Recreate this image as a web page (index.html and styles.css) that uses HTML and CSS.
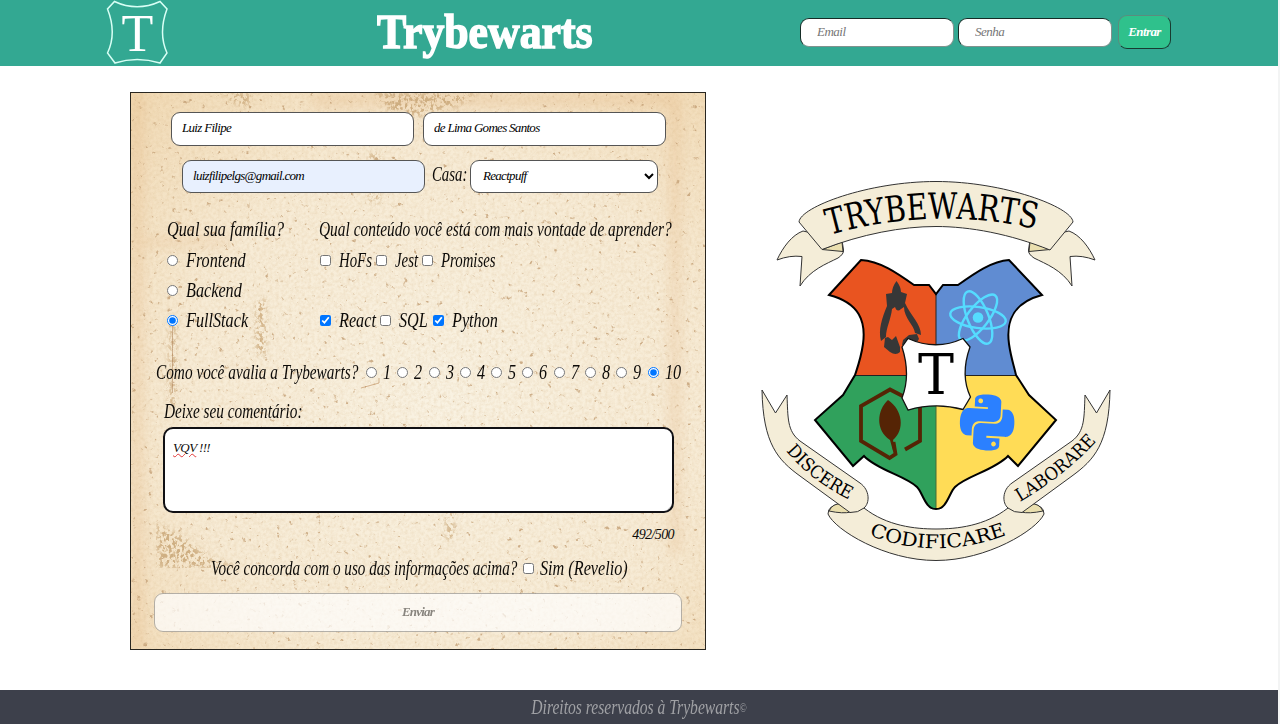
FILE: index.html
```html
<!DOCTYPE html>
<html lang="pt-BR">
<head>
<meta charset="UTF-8">
<title>Trybewarts</title>
<link rel="stylesheet" href="styles.css">
</head>
<body>
<header class="header">
  <svg class="header-logo" viewBox="106 0 62 66">
    <path d="M114.500 1.500Q137 12 160 1.500L167 9Q158 33 167 53L160 63Q137 56 115 63L107.500 53Q117 33 107.500 9Z" fill="none" stroke="#d8fff5" stroke-width="1.500"/>
    <text x="137.500" y="51" text-anchor="middle" font-family="Liberation Serif, serif" font-size="52" fill="#fff">T</text>
  </svg>
  <h1 class="title"><span>Trybewarts</span></h1>
  <form class="login">
    <input type="text" placeholder="Email">
    <input type="password" placeholder="Senha">
    <button type="button">Entrar</button>
  </form>
</header>
<main class="main">
  <form class="form">
    <svg class="paper" width="574" height="557" preserveAspectRatio="none">
      <defs>
        <radialGradient id="tone" cx=".54" cy=".56" r=".76">
          <stop offset="0" stop-color="#f9f2e2"/><stop offset=".6" stop-color="#f7ebd5"/><stop offset="1" stop-color="#f1dab5"/>
        </radialGradient>
        <filter id="grain" x="0" y="0" width="1" height="1">
          <feTurbulence type="fractalNoise" baseFrequency=".31" numOctaves="3" seed="4"/>
          <feColorMatrix values="0 0 0 0 .65  0 0 0 0 .44  0 0 0 0 .22  .9 0 0 0 -.32"/>
        </filter>
        <filter id="specks" x="0" y="0" width="1" height="1">
          <feTurbulence type="fractalNoise" baseFrequency=".173" numOctaves="4" seed="31"/>
          <feColorMatrix values="0 0 0 0 .55  0 0 0 0 .35  0 0 0 0 .18  0 7 0 0 -4.900"/>
        </filter>
        <filter id="stains" x="0" y="0" width="1" height="1">
          <feGaussianBlur in="SourceAlpha" stdDeviation="3" result="area"/>
          <feTurbulence type="fractalNoise" baseFrequency=".31 .23" numOctaves="3" seed="9"/>
          <feColorMatrix values="0 0 0 0 .6  0 0 0 0 .4  0 0 0 0 .2  0 7 0 0 -3.300"/>
          <feComposite in2="area" operator="in"/>
        </filter>
        <filter id="soft"><feGaussianBlur stdDeviation="6"/></filter>
      </defs>
      <rect width="574" height="557" fill="url(#tone)"/>
      <g fill="#dfa66b" opacity=".22" filter="url(#soft)">
        <rect x="0" y="0" width="12" height="557"/><rect x="538" y="0" width="12" height="460"/>
        <rect x="180" y="0" width="360" height="14"/><rect x="0" y="145" width="100" height="8"/>
      </g>
      <rect width="574" height="557" filter="url(#grain)" opacity=".5"/>
      <rect width="574" height="557" filter="url(#specks)" opacity=".8"/>
      <g filter="url(#stains)" opacity=".9">
        <path d="M90 0H122L116 14L102 10ZM242 0H350L325 13L285 24L258 18Z"/>
        <path d="M125 206H135V262H125ZM38 225H45V315H38ZM315 418H323V447H315ZM25 430L52 444L80 466L115 475L26 475Z"/>
        <path d="M238 60H248V110H238Z"/>
      </g>
      <path d="M230 295L248 290V285" fill="none" stroke="#bd8a58" opacity=".6"/>
      <path d="M41.500 227V300" stroke="#a97b50" opacity=".5"/>
    </svg>
    <div class="row row-name">
      <input class="field" type="text" value="Luiz Filipe">
      <input class="field" type="text" value="de Lima Gomes Santos">
    </div>
    <div class="row row-house">
      <input class="field autofilled" type="text" value="luizfilipelgs@gmail.com">
      <label class="w-casa"><span class="ink">Casa:</span></label>
      <select class="field"><option>Reactpuff</option></select>
    </div>
    <div class="choices">
      <div class="family">
        <p><span class="ink">Qual sua família?</span></p>
        <label><input type="radio" name="family"><span class="ink">Frontend</span></label>
        <label><input type="radio" name="family"><span class="ink">Backend</span></label>
        <label><input type="radio" name="family" checked><span class="ink">FullStack</span></label>
      </div>
      <div class="subjects">
        <p><span class="ink question">Qual conteúdo você está com mais vontade de aprender?</span></p>
        <div class="options first">
          <label><input type="checkbox"><span class="ink tight">HoFs</span></label>
          <label><input type="checkbox"><span class="ink tight">Jest</span></label>
          <label><input type="checkbox"><span class="ink tight">Promises</span></label>
        </div>
        <div class="options second">
          <label><input type="checkbox" checked><span class="ink">React</span></label>
          <label><input type="checkbox"><span class="ink">SQL</span></label>
          <label><input type="checkbox" checked><span class="ink">Python</span></label>
        </div>
      </div>
    </div>
    <div class="rating">
      <p><span class="ink narrow">Como você avalia a Trybewarts?</span></p>
      <label><input type="radio" name="rate"><span class="ink">1</span></label>
      <label><input type="radio" name="rate"><span class="ink">2</span></label>
      <label><input type="radio" name="rate"><span class="ink">3</span></label>
      <label><input type="radio" name="rate"><span class="ink">4</span></label>
      <label><input type="radio" name="rate"><span class="ink">5</span></label>
      <label><input type="radio" name="rate"><span class="ink">6</span></label>
      <label><input type="radio" name="rate"><span class="ink">7</span></label>
      <label><input type="radio" name="rate"><span class="ink">8</span></label>
      <label><input type="radio" name="rate"><span class="ink">9</span></label>
      <label><input type="radio" name="rate" checked><span class="ink">10</span></label>
    </div>
    <p class="comment-label"><span class="ink narrow">Deixe seu comentário:</span></p>
    <div class="comment"><span class="misspelled">VQV</span> !!!</div>
    <p class="counter">492/500</p>
    <div class="agree">
      <p><span class="ink narrow">Você concorda com o uso das informações acima?</span></p>
      <label><input type="checkbox"><span class="ink">Sim (Revelio)</span></label>
    </div>
    <button class="send" type="button" disabled>Enviar</button>
  </form>
  <svg class="crest" viewBox="755 175 360 390">
    <defs>
      <g id="tail" fill="#f4edd8" stroke="#333" stroke-width="1">
        <path d="M803 231C792 235 783 247 777 260Q790 255 802 256.500L800 286C810 270 826 264 838 258Q844 254 843.500 250L842 240Z"/>
        <path d="M822 249.500L842 242L843 251.500Z" fill="#eadfae"/>
      </g>
      <g id="side" fill="#f4edd8" stroke="#333" stroke-width="1">
        <path d="M762 390L775.500 413L787 395C788 418 787 431 800 441L860 483C870 490 870 503 864 508Q858 513 850 512.500L800 476C778 460 763 444 762 390Z"/>
      </g>
      <path id="fold" d="M829 511Q833 503 841 504L851 512Q843 514 829 511Z" fill="#eadfae" stroke="#333"/>
      <path id="shield" d="M829 295L861 260C880 261 897 273 914 285H929L936 294L943 285H958C975 273 992 261 1009 260L1042 295C1012 303 1006 322 1009 344C1011 358 1014 366 1016 375L1029 395L1056 420L1018 466L1008 456C995 470 966 476 955 487C949 493 947 509 936 509C925 509 923 493 917 487C906 476 877 470 864 456L853 466L815 420L843 395L855 375C858 366 861 358 863 344C866 322 860 303 829 295Z"/>
      <clipPath id="inside"><use href="#shield"/></clipPath>
      <path id="snake" d="M14.25.18l.9.2.73.26.59.3.45.32.34.34.25.34.16.33.1.3.04.26.02.2-.01.13V8.5l-.05.63-.13.55-.21.46-.26.38-.3.31-.33.25-.35.19-.35.14-.33.1-.3.07-.26.04-.21.02H8.770l-.69.05-.59.14-.5.22-.41.27-.33.32-.27.35-.2.36-.15.37-.1.35-.07.32-.04.27-.02.21v3.060H3.170l-.21-.03-.28-.07-.32-.12-.35-.18-.36-.26-.36-.36-.35-.46-.32-.59-.28-.73-.21-.88-.14-1.050-.05-1.230.06-1.220.16-1.040.24-.87.32-.71.36-.57.4-.44.42-.33.42-.24.4-.16.36-.1.32-.05.24-.01h.16l.06.01h8.160v-.83H6.180l-.01-2.750-.02-.37.05-.34.11-.31.17-.28.25-.26.31-.23.38-.2.44-.18.51-.15.58-.12.64-.1.71-.06.77-.04.84-.02 1.270.05zm-6.300 1.980l-.23.33-.08.41.08.41.23.34.33.22.41.09.41-.09.33-.22.23-.34.08-.41-.08-.41-.23-.33-.33-.22-.41-.09-.41.09z"/>
      <path id="arc-top" d="M829 235Q936 205 1039 230"/>
      <path id="arc-left" d="M786 451Q812 482 852 501"/>
      <path id="arc-bottom" d="M869 535Q936 562 1009 534"/>
      <path id="arc-right" d="M1020 502Q1068 474 1099 438"/>
    </defs>
    <use href="#tail"/><use href="#tail" transform="translate(1872 0) scale(-1 1)"/>
    <path d="M799 222C800 207 868 181.500 936 181.500S1072 207 1073 222L1050 250C1010 234 970 226.500 936 226.500S862 234 822 249.500Z" fill="#f4edd8" stroke="#333"/>
    <g clip-path="url(#inside)">
      <rect x="810" y="255" width="126" height="121" fill="#e95420"/>
      <rect x="936" y="255" width="126" height="121" fill="#608cd2"/>
      <rect x="810" y="376" width="126" height="140" fill="#30a15c"/>
      <rect x="936" y="376" width="126" height="140" fill="#ffdc56"/>
      <path d="M936 255V376M810 375.500H1062" stroke="#222"/>
      <path d="M936 376V512" stroke="#486b35"/>
    </g>
    <use href="#shield" fill="none" stroke="#000" stroke-width="2"/>
    <g fill="#373737">
      <path d="M896.500 281Q892 287 892 293L886 294L887 306C882 318 878 330 881 341L886 337C886 328 891 319 892 309L895 307Q897 313 901 309L904 307C904 318 914 325 915 333L921 335C921 324 911 316 905 303L907 294L901 292Q901 287 896.500 281Z"/>
      <path d="M885 338L888 337L892 340L896 336L900 347L900 352Q896 356 890 352L884 347Z"/>
      <path d="M903 340L909 335L917 334L919 339L915 345H902Z"/>
    </g>
    <g fill="none" stroke="#55dcff" stroke-width="2.400">
      <ellipse cx="978" cy="317.500" rx="28" ry="10.500" transform="rotate(8 978 317.500)"/>
      <ellipse cx="978" cy="317.500" rx="28" ry="10.500" transform="rotate(68 978 317.500)"/>
      <ellipse cx="978" cy="317.500" rx="28" ry="10.500" transform="rotate(128 978 317.500)"/>
      <circle cx="978" cy="317.500" r="5.300" fill="#55dcff" stroke="none"/>
    </g>
    <path d="M905 449.500L920 441V405L890 389.500L861 406V441L889.500 458L895.500 454L893.500 442" fill="none" stroke="#552405" stroke-width="3.800"/>
    <path d="M888 400C877 410 875 430 890 440L893 451L896 453L893 440C905 430 903 410 888 400Z" fill="#552405"/>
    <g fill="#2b80ff" transform="translate(960 394.500) scale(2.260 2.330) rotate(3 12 12)">
      <use href="#snake" fill-rule="evenodd"/><use href="#snake" fill-rule="evenodd" transform="rotate(180 12 12)"/>
    </g>
    <path d="M908 338.500Q936 351 963 338.500L970 347Q960 375 970.500 397L963 409.500Q936 402 908 410L902 398Q911 375 902 347Z" fill="#fff" stroke="#111" stroke-width="1.300"/>
    <text x="936" y="394" text-anchor="middle" font-size="56" textLength="36" lengthAdjust="spacingAndGlyphs">T</text>
    <path d="M841 504Q828 505 828 514C835 530 885 560.500 936 560.500S1037 530 1044 514Q1044 505 1031 504L1008 508C985 526 957 529 936 529S887 526 864 508Z" fill="#f4edd8" stroke="#333"/>
    <use href="#fold"/><use href="#fold" transform="translate(1872 0) scale(-1 1)"/>
    <use href="#side"/><use href="#side" transform="translate(1872 0) scale(-1 1)"/>
    <text font-size="36" textLength="209" lengthAdjust="spacingAndGlyphs"><textPath href="#arc-top">TRYBEWARTS</textPath></text>
    <text font-size="18" textLength="80" lengthAdjust="spacingAndGlyphs"><textPath href="#arc-left">DISCERE</textPath></text>
    <text font-size="19" textLength="141" lengthAdjust="spacingAndGlyphs"><textPath href="#arc-bottom">CODIFICARE</textPath></text>
    <text font-size="18" textLength="98" lengthAdjust="spacingAndGlyphs"><textPath href="#arc-right">LABORARE</textPath></text>
  </svg>
</main>
<footer class="footer"><span>Direitos reservados à Trybewarts<small>©</small></span></footer>
</body>
</html>
```

FILE: styles.css
```css
* { box-sizing: border-box; }
html { background: #f3f4f4; }
body {
  margin: 0;
  width: 1278px;
  height: 724px;
  overflow: hidden;
  display: flex;
  flex-direction: column;
  background: #fff;
  font-family: "Liberation Serif", serif;
  font-style: italic;
  color: #0c0a08;
}
p { margin: 0; }
input, button, select { font-family: inherit; font-style: italic; margin: 0; }

.header {
  height: 66px;
  flex: none;
  background: #33a892;
  display: flex;
  align-items: center;
  padding-left: 106px;
}
.header-logo { width: 62px; height: 66px; font-style: normal; }
.title {
  margin: -2px 0 0 209px;
  width: 422px;
  font-size: 48px;
  line-height: 64px;
  font-style: normal;
  color: #fff;
  -webkit-text-stroke: 1.5px #fff;
}
.title span { display: inline-block; transform: scaleX(.912); transform-origin: left; }
.login { display: flex; align-items: center; gap: 4px; padding: 0 0 2px 1px; }
.login input {
  width: 154px;
  height: 29px;
  padding: 0 16px;
  border: 1px solid;
  border-color: #152c26 #81928e #81928e #152c26;
  border-radius: 9px;
  background: #fff;
  font-size: 13px;
  letter-spacing: -.5px;
}
.login input::placeholder { color: #757575; }
.login button {
  width: 53px;
  height: 34px;
  margin-left: 2px;
  padding: 0;
  border: 1px solid;
  border-color: #5b8c7e #183b30 #183b30 #5b8c7e;
  border-radius: 9px;
  background: #2fc18c;
  color: #fff;
  font-size: 13px;
  font-weight: bold;
  letter-spacing: -.6px;
}

.main { height: 624px; flex: none; display: flex; align-items: flex-start; padding: 26px 0 0 130px; }
.form {
  position: relative;
  isolation: isolate;
  width: 576px;
  height: 558px;
  border: 1px solid #292620;
  padding: 19px 23px 0;
  font-size: 20px;
  line-height: 30px;
}
.paper { position: absolute; inset: 0; z-index: -1; height: 556px; }
.row { display: flex; }
.row-name { gap: 9px; padding-left: 17px; }
.row-house { padding: 14px 0 0 28px; }
.field {
  width: 243px;
  height: 34px;
  padding: 0 10px 2px;
  border: 1px solid #555;
  border-radius: 9px;
  background-color: #fff;
  color: #000;
  font-size: 13px;
  letter-spacing: -.7px;
}
.autofilled { background-color: #e8f0fe; height: 33px; }
.w-casa { width: 34px; margin: -1px 4px 0 7px; }
select.field { width: 188px; height: 33px; padding: 0 0 2px 8px; }
.ink { display: inline-block; white-space: nowrap; transform: scaleX(.81); transform-origin: left; }
.narrow { transform: scaleX(.765); }
.tight, .w-casa .ink { transform: scaleX(.74); }
label { display: flex; align-items: center; height: 30px; }
input[type="radio"], input[type="checkbox"] { width: 11px; height: 11px; flex: none; }
label .ink { width: 0; }

.choices { display: flex; padding: 21px 0 0 13px; }
.family { width: 152px; }
.family p, .subjects p { height: 31px; }
.family input { margin: 0 8px 0 0; }
.options { display: grid; }
.options input { margin-right: 8px; margin-left: 1px; }
.first { grid-template-columns: 56px 46px 80px; }
.second { grid-template-columns: 60px 53px 80px; margin-top: 30px; }
.subjects .question { width: 352px; transform: scaleX(.77); }

.rating { display: flex; padding: 22px 0 0 2px; }
.rating p { width: 210px; height: 30px; }
.rating label { width: 31.300px; flex: none; }
.rating input { margin-right: 6px; }
.comment-label { padding-left: 10px; margin-top: 9px; }
.comment {
  width: 511px;
  height: 86px;
  margin: 1px 0 0 9px;
  padding: 11px 8px;
  border: 2px solid #101014;
  border-radius: 10px;
  background: linear-gradient(135deg, #fff 98.800%, #777 99.500%);
  font-size: 13px;
  line-height: 16px;
  letter-spacing: -.6px;
}
.misspelled { text-decoration: underline wavy #e03838 1px; text-underline-offset: 1px; }
.counter { height: 43px; padding: 7px 8px 0 0; text-align: right; font-size: 14px; letter-spacing: -.6px; }
.agree { display: flex; padding: 0 0 0 57px; margin-top: -3px; }
.agree p { width: 312px; }
.agree input { margin-right: 6px; }
.agree .narrow { transform: scaleX(.758); }
.send {
  display: block;
  width: 528px;
  height: 39px;
  margin-top: 10px;
  padding: 0 0 2px;
  border: 1px solid #999;
  border-radius: 9px;
  background: #fff;
  color: #5c5c5c;
  font-size: 13px;
  font-weight: bold;
  letter-spacing: -.8px;
  opacity: .7;
}
.crest {
  width: 360px;
  height: 390px;
  margin: 83px 0 0 49px;
  font-family: "DejaVu Serif", serif;
  font-style: normal;
}
.footer {
  height: 34px;
  flex: none;
  background: #3d404b;
  color: #a0a1a5;
  text-align: center;
  font-size: 20px;
  line-height: 34px;
}
.footer span { display: inline-block; transform: scaleX(.78); }
.footer small { font-size: 12px; line-height: 1; vertical-align: 2px; }
```
